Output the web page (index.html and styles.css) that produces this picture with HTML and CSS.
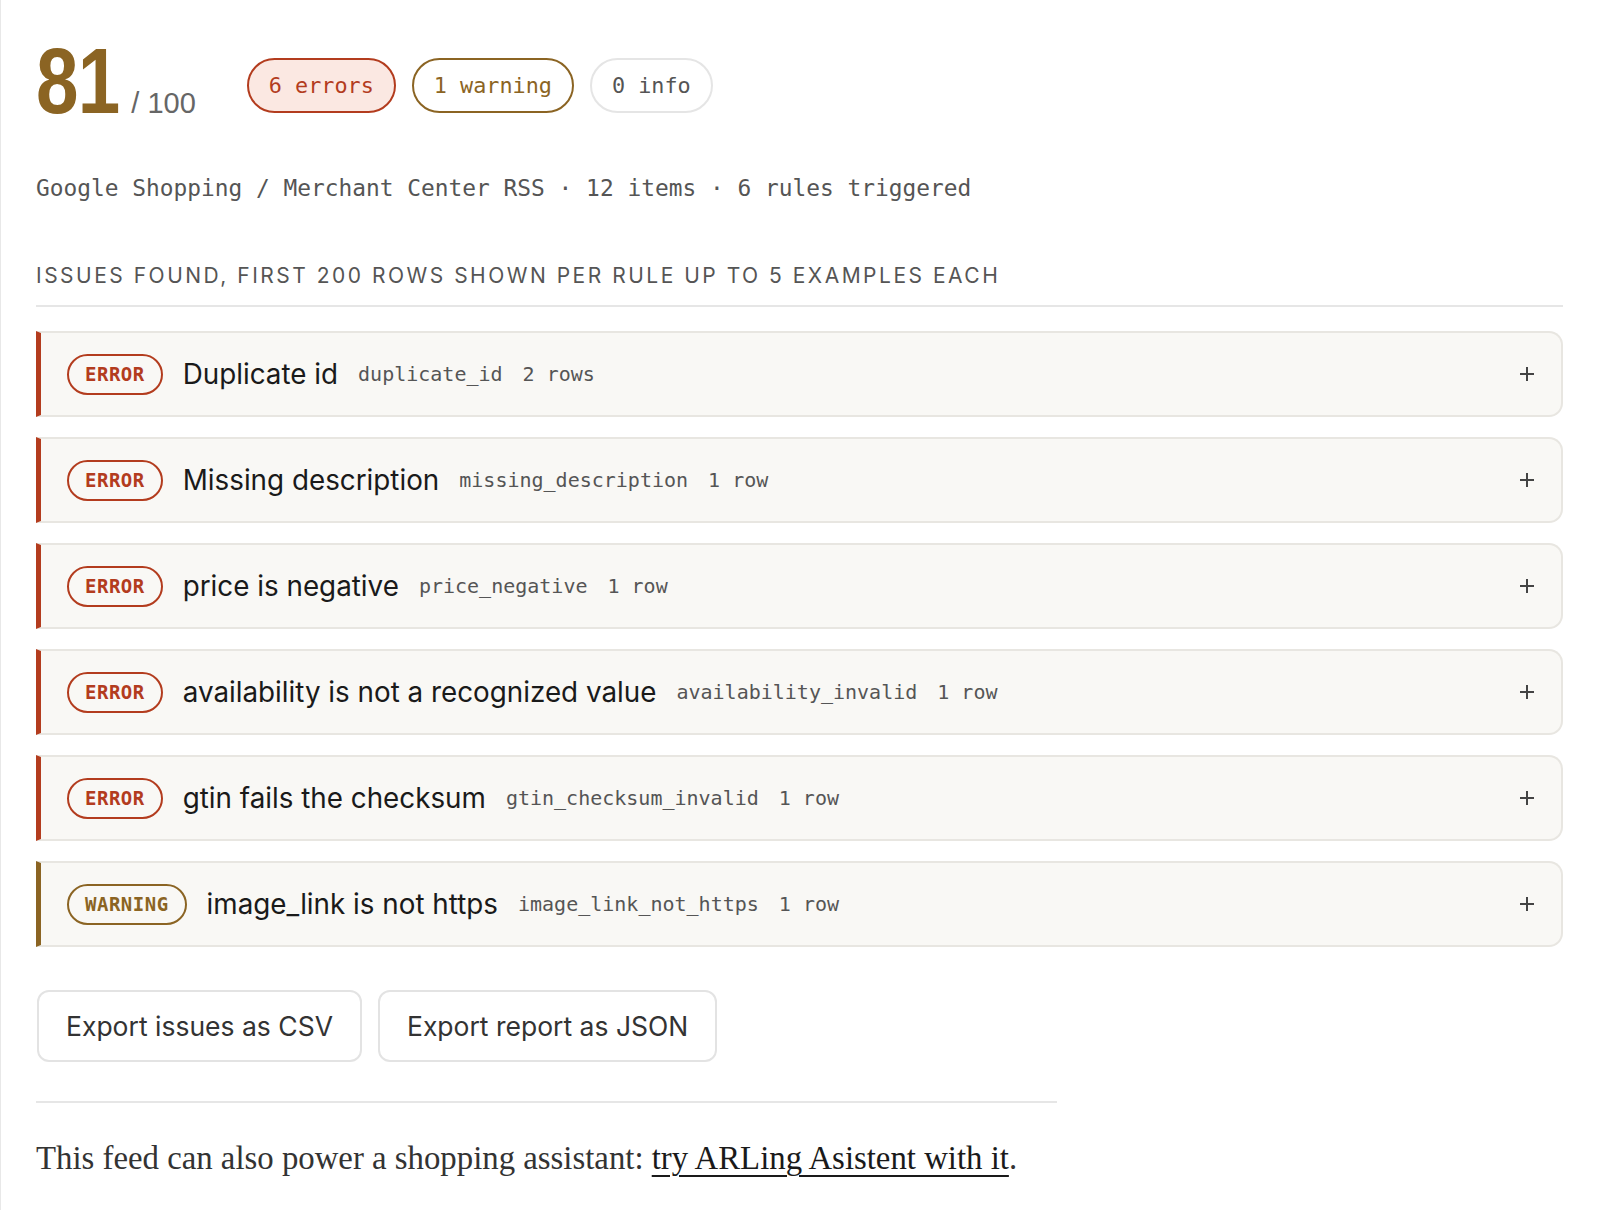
FILE: index.html
```html
<!DOCTYPE html>
<html lang="en">
<head>
<meta charset="utf-8">
<title>Feed report</title>
<link rel="stylesheet" href="styles.css">
</head>
<body>
<main class="page">
  <section class="score-row">
    <div class="score">
      <span class="score-value">81</span>
      <span class="score-max">/ 100</span>
    </div>
    <div class="pills">
      <span class="pill pill-error">6 errors</span>
      <span class="pill pill-warning">1 warning</span>
      <span class="pill pill-info">0 info</span>
    </div>
  </section>

  <p class="meta">Google Shopping / Merchant Center RSS · 12 items · 6 rules triggered</p>

  <h2 class="section-title">Issues found, first 200 rows shown per rule up to 5 examples each</h2>

  <ul class="issues">
    <li class="issue issue-error">
      <span class="badge badge-error">ERROR</span>
      <span class="issue-title">Duplicate id</span>
      <code class="issue-code">duplicate_id</code>
      <span class="issue-count">2 rows</span>
      <svg class="plus" width="14" height="14" viewBox="0 0 14 14"><path d="M7 0v14M0 7h14" stroke="currentColor" stroke-width="2"/></svg>
    </li>
    <li class="issue issue-error">
      <span class="badge badge-error">ERROR</span>
      <span class="issue-title">Missing description</span>
      <code class="issue-code">missing_description</code>
      <span class="issue-count">1 row</span>
      <svg class="plus" width="14" height="14" viewBox="0 0 14 14"><path d="M7 0v14M0 7h14" stroke="currentColor" stroke-width="2"/></svg>
    </li>
    <li class="issue issue-error">
      <span class="badge badge-error">ERROR</span>
      <span class="issue-title">price is negative</span>
      <code class="issue-code">price_negative</code>
      <span class="issue-count">1 row</span>
      <svg class="plus" width="14" height="14" viewBox="0 0 14 14"><path d="M7 0v14M0 7h14" stroke="currentColor" stroke-width="2"/></svg>
    </li>
    <li class="issue issue-error">
      <span class="badge badge-error">ERROR</span>
      <span class="issue-title">availability is not a recognized value</span>
      <code class="issue-code">availability_invalid</code>
      <span class="issue-count">1 row</span>
      <svg class="plus" width="14" height="14" viewBox="0 0 14 14"><path d="M7 0v14M0 7h14" stroke="currentColor" stroke-width="2"/></svg>
    </li>
    <li class="issue issue-error">
      <span class="badge badge-error">ERROR</span>
      <span class="issue-title">gtin fails the checksum</span>
      <code class="issue-code">gtin_checksum_invalid</code>
      <span class="issue-count">1 row</span>
      <svg class="plus" width="14" height="14" viewBox="0 0 14 14"><path d="M7 0v14M0 7h14" stroke="currentColor" stroke-width="2"/></svg>
    </li>
    <li class="issue issue-warning">
      <span class="badge badge-warning">WARNING</span>
      <span class="issue-title">image_link is not https</span>
      <code class="issue-code">image_link_not_https</code>
      <span class="issue-count">1 row</span>
      <svg class="plus" width="14" height="14" viewBox="0 0 14 14"><path d="M7 0v14M0 7h14" stroke="currentColor" stroke-width="2"/></svg>
    </li>
  </ul>

  <div class="actions">
    <button class="btn" type="button">Export issues as CSV</button>
    <button class="btn" type="button">Export report as JSON</button>
  </div>

  <hr class="rule">

  <p class="footer-note">This feed can also power a shopping assistant: <a href="#" class="footer-link">try ARLing Asistent with it</a>.</p>
</main>
</body>
</html>
```

FILE: styles.css
```css
* { box-sizing: border-box; }

html, body {
  margin: 0;
  padding: 0;
  background: #ffffff;
}

body {
  font-family: "Inter", "Liberation Sans", sans-serif;
  color: #1a1a1a;
}

.page {
  min-height: 1210px;
  border-left: 1px solid #e8e8e8;
  padding: 35px 35px 40px 35px;
}

/* score row */
.score-row {
  display: flex;
  align-items: flex-start;
}

.score {
  display: flex;
  align-items: baseline;
}

.score-value {
  display: inline-block;
  font-family: "Liberation Sans", sans-serif;
  font-weight: 700;
  font-size: 92px;
  line-height: 92px;
  color: #8b6423;
  letter-spacing: -1px;
  transform: scaleX(0.83);
  transform-origin: left center;
  margin-right: -17px;
}

.score-max {
  font-family: "Liberation Sans", sans-serif;
  font-size: 29px;
  color: #666666;
  margin-left: 12px;
}

.pills {
  display: flex;
  gap: 16px;
  margin-left: 51px;
  margin-top: 23px;
}

.pill {
  display: inline-block;
  font-family: "DejaVu Sans Mono", "Liberation Mono", monospace;
  font-size: 21.8px;
  line-height: 27px;
  padding: 12px 20px;
  border: 2px solid #e3e3e3;
  border-radius: 28px;
  color: #555555;
  background: #ffffff;
}

.pill-error {
  border-color: #b33c1e;
  color: #b33c1e;
  background: #fbe8e2;
}

.pill-warning {
  border-color: #8b6423;
  color: #8b6423;
}

.pill-info {
  border-color: #e5e5e5;
  color: #555555;
}

/* meta */
.meta {
  margin: 46px 0 0 0;
  font-family: "DejaVu Sans Mono", "Liberation Mono", monospace;
  font-size: 22.85px;
  line-height: 30px;
  color: #555555;
}

.section-title {
  margin: 60px 0 0 0;
  padding-bottom: 16px;
  border-bottom: 2px solid #e6e6e6;
  font-family: "Inter", "Liberation Sans", sans-serif;
  font-weight: 400;
  font-size: 21px;
  line-height: 26px;
  letter-spacing: 2.5px;
  text-transform: uppercase;
  color: #555555;
}

/* issues */
.issues {
  list-style: none;
  margin: 24px 0 0 0;
  padding: 0;
  display: flex;
  flex-direction: column;
  gap: 20px;
}

.issue {
  display: flex;
  align-items: center;
  height: 86px;
  padding: 0 27px 0 26px;
  background: #f9f8f5;
  border: 2px solid #e8e6e1;
  border-left: 5px solid #b33c1e;
  border-radius: 0 14px 14px 0;
}

.issue-warning {
  border-left-color: #8b6423;
}

.badge {
  display: inline-block;
  font-family: "DejaVu Sans Mono", "Liberation Mono", monospace;
  font-weight: 700;
  font-size: 19px;
  line-height: 37px;
  height: 41px;
  padding: 0 16px;
  border: 2px solid #b33c1e;
  border-radius: 22px;
  color: #b33c1e;
  letter-spacing: 0.5px;
}

.badge-warning {
  border-color: #8b6423;
  color: #8b6423;
}

.issue-title {
  margin-left: 20px;
  font-size: 27.8px;
  line-height: 36px;
  color: #1a1a1a;
}

.issue-code,
.issue-count {
  font-family: "DejaVu Sans Mono", "Liberation Mono", monospace;
  font-size: 20px;
  color: #555555;
  margin-left: 20px;
}

.plus {
  margin-left: auto;
  color: #444444;
  flex: none;
}

/* actions */
.actions {
  display: flex;
  gap: 16px;
  margin-top: 43px;
  padding-left: 1px;
}

.btn {
  height: 72px;
  padding: 0 27px;
  background: #ffffff;
  border: 2px solid #e3e3e3;
  border-radius: 12px;
  font-family: "Inter", "Liberation Sans", sans-serif;
  font-size: 26.5px;
  color: #333333;
}

.rule {
  width: 1021px;
  margin: 39px 0 0 0;
  border: 0;
  border-top: 2px solid #e6e6e6;
}

.footer-note {
  margin: 35px 0 0 0;
  font-family: "Liberation Serif", "DejaVu Serif", serif;
  font-size: 32.8px;
  line-height: 40px;
  color: #333333;
}

.footer-link {
  color: #1a1a1a;
  text-decoration: underline;
  text-decoration-thickness: 2px;
  text-underline-offset: 6px;
}
```
